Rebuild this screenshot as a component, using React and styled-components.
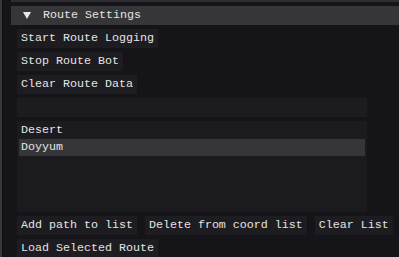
import React from "react";
import styled, { createGlobalStyle } from "styled-components";

const Global = createGlobalStyle`
  html, body { margin: 0; padding: 0; background: #141318; }
  body { width: 399px; height: 257px; overflow: hidden; }
  * { box-sizing: border-box; }
`;

const Page = styled.div`
  display: flex;
  align-items: flex-start;
  width: 399px;
  height: 257px;
  overflow: hidden;
  background: #151419;
  font-family: "Liberation Mono", "DejaVu Sans Mono", monospace;
  font-size: 11.67px;
  color: #e4e4e4;
`;

const Backdrop = styled.div`
  width: 2px;
  height: 257px;
  flex: none;
  background: #3b3734;
`;

const Edge = styled.div`
  width: 1px;
  height: 257px;
  flex: none;
  background: #0e0d11;
`;

const Window = styled.div`
  flex: 1;
  display: flex;
  flex-direction: column;
  gap: 4px;
  padding-left: 8px;
  background: #151419;
  min-width: 0;
  & > * { flex: none; }
`;

const PrevBar = styled.div`
  height: 2px;
  background: #2e2d31;
`;

const Header = styled.div`
  height: 19px;
  display: flex;
  align-items: center;
  background: #363638;
  padding-left: 12px;
  gap: 12px;
  white-space: pre;
  line-height: 13px;
`;

const Arrow = styled.span`
  width: 0;
  height: 0;
  border-left: 4.5px solid transparent;
  border-right: 4.5px solid transparent;
  border-top: 7px solid #e8e8e8;
`;

const Body = styled.div`
  display: flex;
  flex-direction: column;
  gap: 4px;
  padding-left: 6px;
  & > * { flex: none; }
`;

const Row = styled.div`
  display: flex;
  gap: 8px;
`;

const Button = styled.div`
  align-self: flex-start;
  height: 19px;
  padding: 0 4px;
  display: flex;
  align-items: center;
  background: #1d1c21;
  white-space: pre;
  line-height: 13px;
  flex: none;
`;

const Input = styled.div`
  width: 350px;
  height: 19px;
  background: #1c1b20;
`;

const ListBox = styled.div`
  width: 350px;
  height: 91px;
  background: #1b1a1f;
  padding: 1px 2px;
  display: flex;
  flex-direction: column;
`;

const Item = styled.div`
  height: 17px;
  flex: none;
  display: flex;
  align-items: center;
  padding-left: 2px;
  white-space: pre;
  line-height: 13px;
  background: ${(p) => (p.$selected ? "#363638" : "transparent")};
`;

export default function App() {
  const items = ["Desert", "Doyyum"];
  return (
    <Page>
      <Global />
      <Backdrop />
      <Edge />
      <Window>
        <PrevBar />
        <Header>
          <Arrow />
          <span>Route Settings</span>
        </Header>
        <Body>
          <Button>Start Route Logging</Button>
          <Button>Stop Route Bot</Button>
          <Button>Clear Route Data</Button>
          <Input />
          <ListBox>
            {items.map((it, i) => (
              <Item key={it} $selected={i === 1}>
                {it}
              </Item>
            ))}
          </ListBox>
          <Row>
            <Button>Add path to list</Button>
            <Button>Delete from coord list</Button>
            <Button>Clear List</Button>
          </Row>
          <Button>Load Selected Route</Button>
        </Body>
      </Window>
    </Page>
  );
}
